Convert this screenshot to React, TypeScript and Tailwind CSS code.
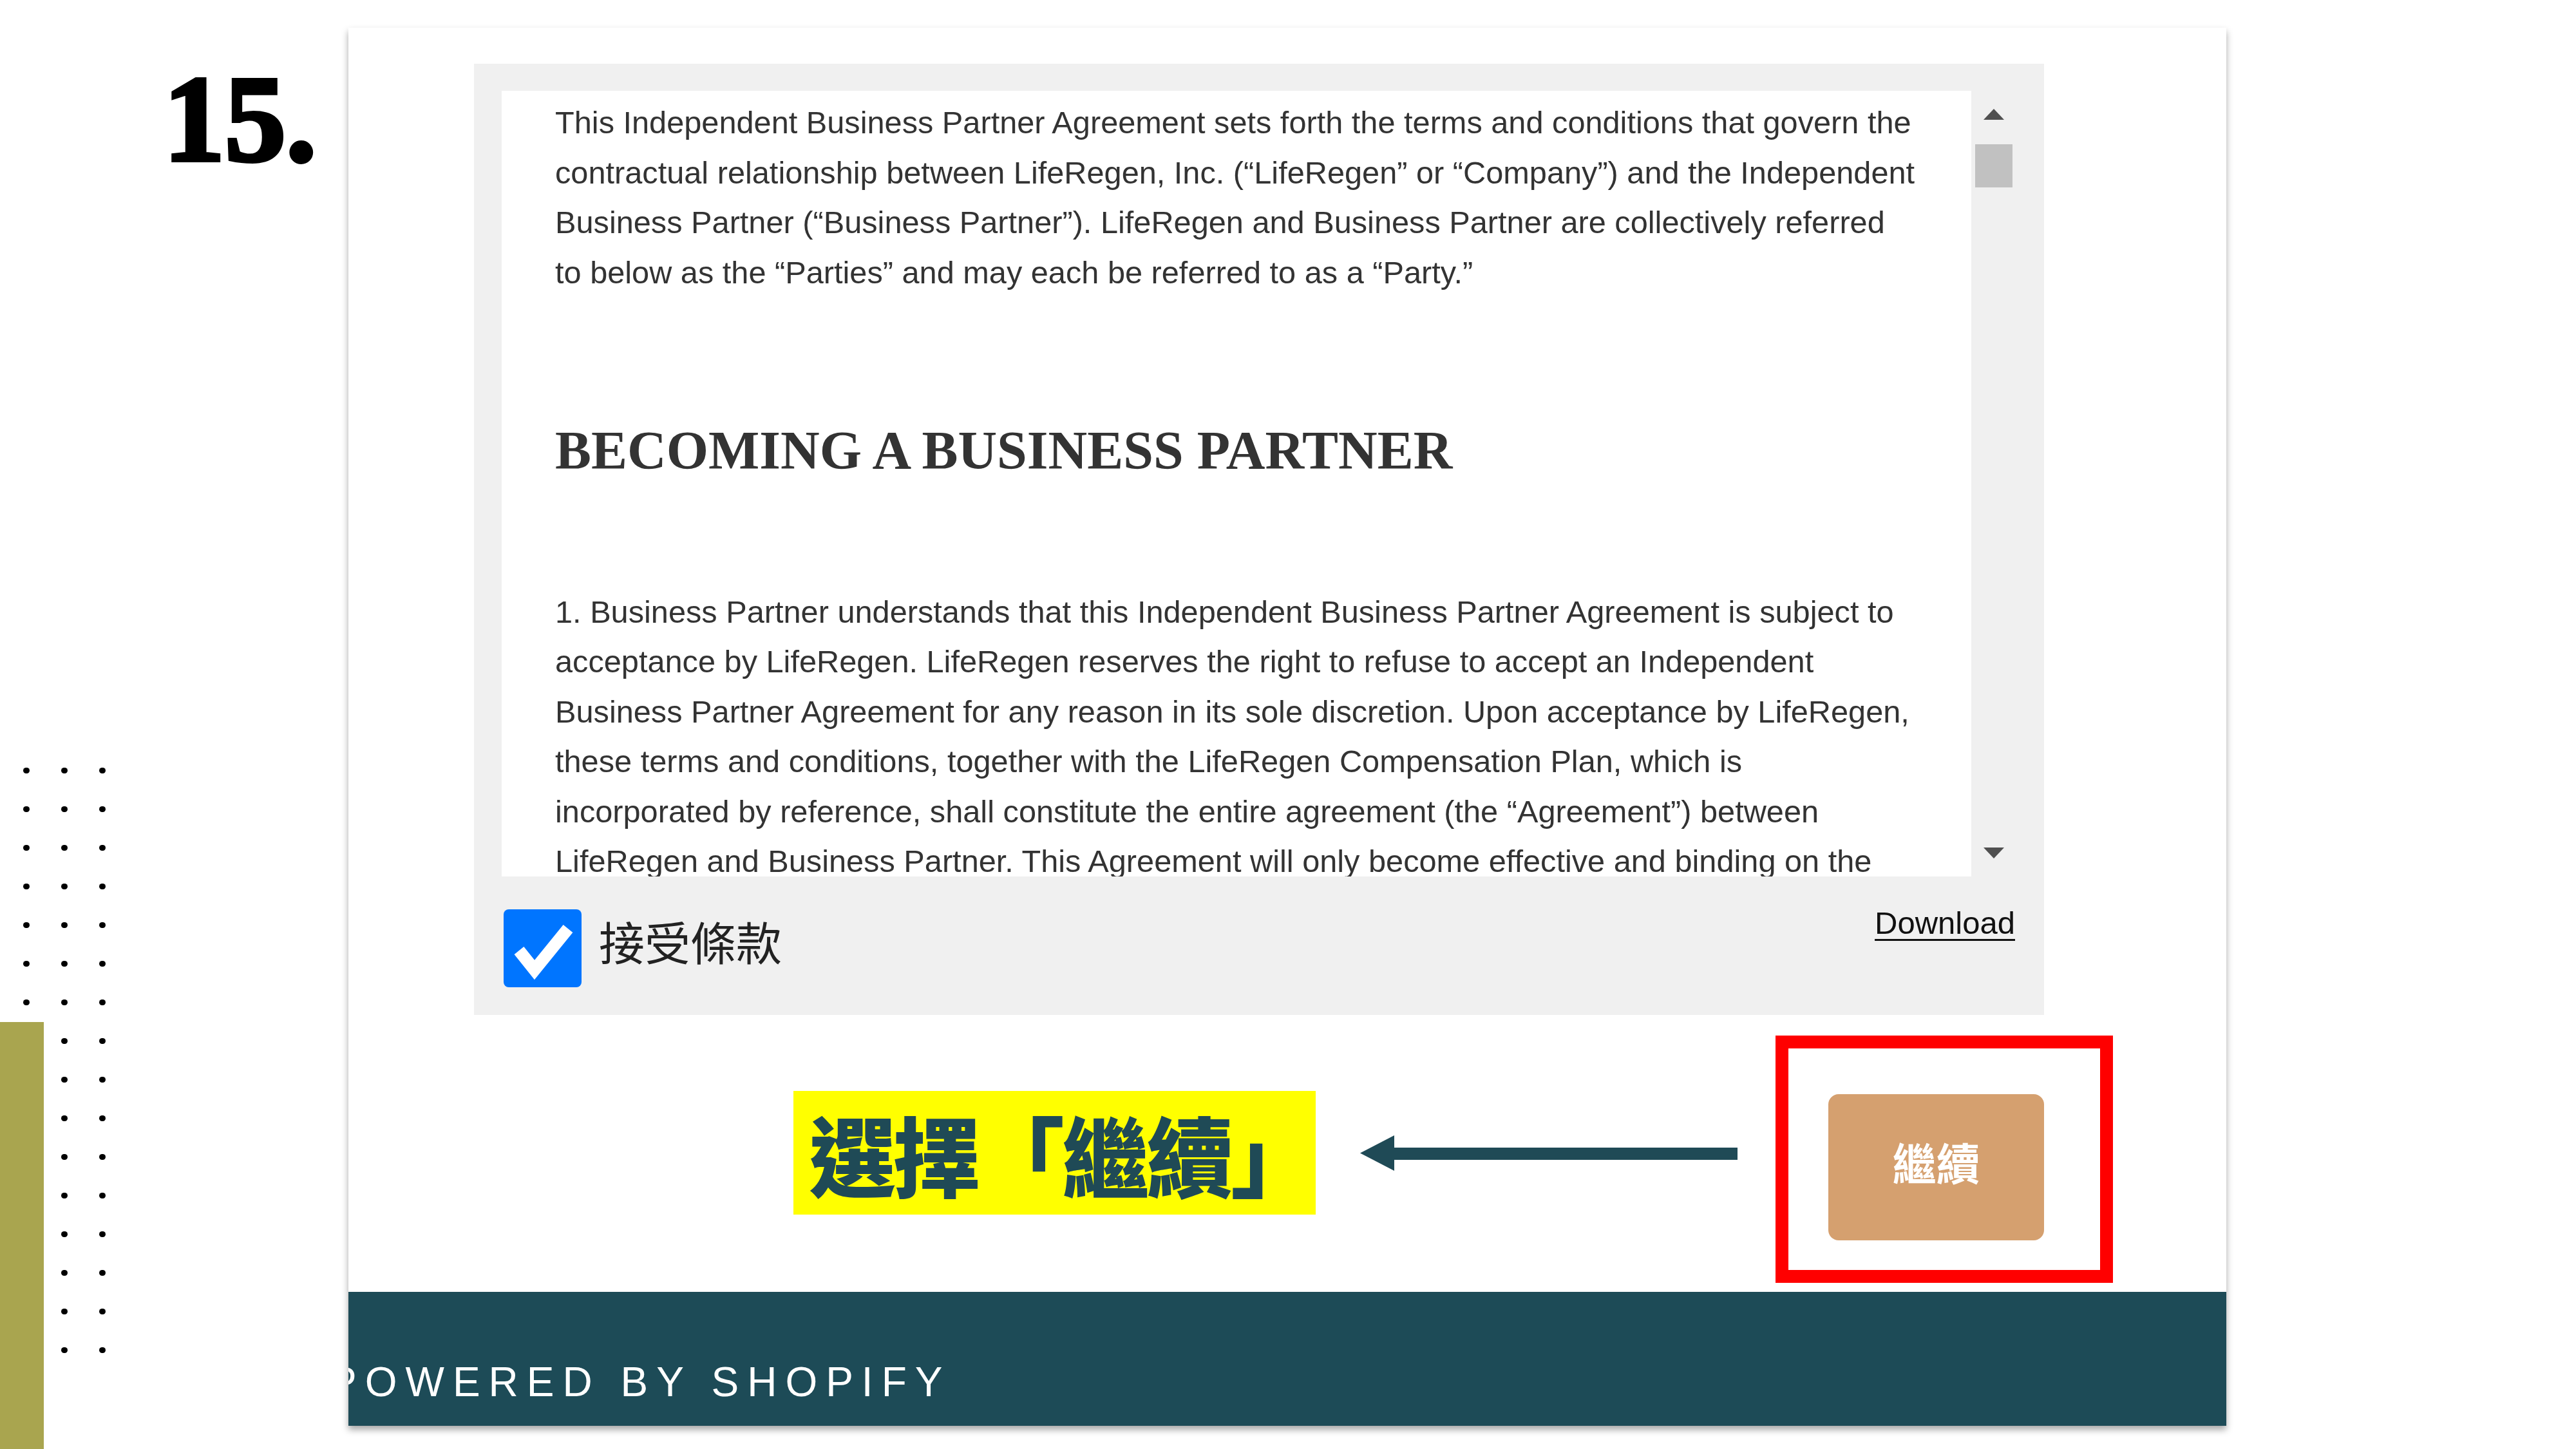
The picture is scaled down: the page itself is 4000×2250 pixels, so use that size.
import React from 'react';

const sans = { fontFamily: '"Liberation Sans", Arial, "Noto Sans CJK TC", sans-serif' };

const para1 = [
    'This Independent Business Partner Agreement sets forth the terms and conditions that govern the',
    'contractual relationship between LifeRegen, Inc. (“LifeRegen” or “Company”) and the Independent',
    'Business Partner (“Business Partner”). LifeRegen and Business Partner are collectively referred',
    'to below as the “Parties” and may each be referred to as a “Party.”',
];

const para2 = [
    '1. Business Partner understands that this Independent Business Partner Agreement is subject to',
    'acceptance by LifeRegen. LifeRegen reserves the right to refuse to accept an Independent',
    'Business Partner Agreement for any reason in its sole discretion. Upon acceptance by LifeRegen,',
    'these terms and conditions, together with the LifeRegen Compensation Plan, which is',
    'incorporated by reference, shall constitute the entire agreement (the “Agreement”) between',
    'LifeRegen and Business Partner. This Agreement will only become effective and binding on the',
];

// dot pattern: 16 rows, first column only has 7
const DotGrid = () => {
    const cells = [];
    for (let r = 0; r < 16; r++) {
        for (let c = 0; c < 3; c++) {
            const show = c > 0 || r < 7;
            cells.push(
                <div key={`${r}-${c}`} className={show ? 'w-[10px] h-[9px] rounded-full bg-black' : 'w-[10px] h-[9px]'} />
            );
        }
    }
    return <div className="grid grid-cols-[repeat(3,10px)] gap-x-[49px] gap-y-[51px] ml-[36px]">{cells}</div>;
};

const Agreement = () => (
    <div className="bg-[#f0f0f0] p-[43px] pt-[42px] flex flex-col">
        <div className="flex">
            {/* scrollable terms */}
            <div className="w-[2282px] h-[1220px] bg-white overflow-hidden pl-[83px] pt-[11px] text-[#333] text-[48.7px] leading-[77.5px] whitespace-nowrap" style={sans}>
                <p>{para1.map((l, i) => <span key={i} className="block">{l}</span>)}</p>
                <h2 className="mt-[188px] text-[84px] leading-[1.2] font-bold text-[#333]" style={{ fontFamily: '"Liberation Serif", "Times New Roman", serif' }}>
                    BECOMING A BUSINESS PARTNER
                </h2>
                <p className="mt-[161px]">{para2.map((l, i) => <span key={i} className="block">{l}</span>)}</p>
            </div>
            {/* scrollbar */}
            <div className="w-[70px] flex flex-col items-center pt-[28px] pb-[28px]">
                <svg width="32" height="17" viewBox="0 0 32 17"><polygon points="16,0 32,17 0,17" fill="#505050" /></svg>
                <div className="mt-[38px] w-[58px] h-[67px] bg-[#c1c1c1]" />
                <div className="flex-1" />
                <svg width="32" height="17" viewBox="0 0 32 17"><polygon points="0,0 32,0 16,17" fill="#505050" /></svg>
            </div>
        </div>
        <div className="flex items-start justify-between h-[172px]">
            <label className="flex items-center gap-[27px] mt-[51px] ml-[3px]">
                <span className="w-[121px] h-[121px] rounded-[8px] bg-[#0075ff] flex items-center justify-center">
                    <svg width="121" height="121" viewBox="0 0 121 121">
                        <path d="M24 64 L48 94 L100 30" fill="none" stroke="white" strokeWidth="19" strokeLinejoin="miter" />
                    </svg>
                </span>
                <span className="text-[71px] leading-none text-[#222] mb-[24px]" style={{ fontFamily: '"Noto Sans CJK TC", sans-serif' }}>接受條款</span>
            </label>
            <a className="mt-[48px] mr-[2px] text-[49px] leading-none text-[#111] underline underline-offset-[8px] decoration-[3px]" style={sans}>
                Download
            </a>
        </div>
    </div>
);

export default function App() {
    return (
        <div className="w-[4000px] h-[2250px] bg-white flex overflow-hidden">
            {/* slide decorations */}
            <aside className="relative w-[541px] shrink-0 flex flex-col">
                <div className="pl-[254px] pt-[90px] text-[190px] leading-none font-bold text-black [-webkit-text-stroke:6px_#000]" style={{ fontFamily: '"Liberation Serif", serif' }}>
                    15.
                </div>
                <div className="mt-[912px]">
                    <DotGrid />
                </div>
                <div className="absolute left-0 bottom-0 w-[68px] h-[663px] bg-[#a9a54f]" />
            </aside>

            {/* page panel */}
            <main className="mt-[43px] w-[2916px] h-[2171px] shrink-0 flex flex-col bg-white shadow-[0_6px_10px_rgba(0,0,0,0.35)]">
                <div className="pl-[195px] pt-[56px] w-[2633px]">
                    <Agreement />
                    <div className="flex items-start">
                        <div className="ml-[496px] mt-[118px] w-[811px] h-[192px] bg-[#ffff00] flex items-center pl-[24px]">
                            <span className="text-[135px] leading-none font-black tracking-[-4px] text-[#1f4a56] whitespace-nowrap" style={{ fontFamily: '"Noto Sans CJK TC", sans-serif' }}>選擇「繼續」</span>
                        </div>
                        <svg className="ml-[69px] mt-[187px]" width="586" height="55" viewBox="0 0 586 55">
                            <polygon points="0,27.5 53,0 53,55" fill="#1f4a56" />
                            <rect x="52" y="19" width="534" height="19" fill="#1f4a56" />
                        </svg>
                        <div className="relative ml-[141px] mt-[123px]">
                            <button className="w-[335px] h-[227px] rounded-[16px] bg-[#d5a06f] text-white text-[68px] font-bold pb-[18px]" style={{ fontFamily: '"Noto Sans CJK TC", sans-serif' }}>
                                繼續
                            </button>
                            <div className="absolute left-[-82px] top-[-91px] w-[524px] h-[384px] border-[20px] border-[#ff0000] pointer-events-none" />
                        </div>
                    </div>
                </div>
                <footer className="mt-auto h-[208px] bg-[#1d4b57] overflow-hidden pt-[108px]">
                    <div className="ml-[-30px] text-[64px] leading-none tracking-[13px] text-white whitespace-nowrap" style={sans}>
                        POWERED BY SHOPIFY
                    </div>
                </footer>
            </main>
        </div>
    );
}
